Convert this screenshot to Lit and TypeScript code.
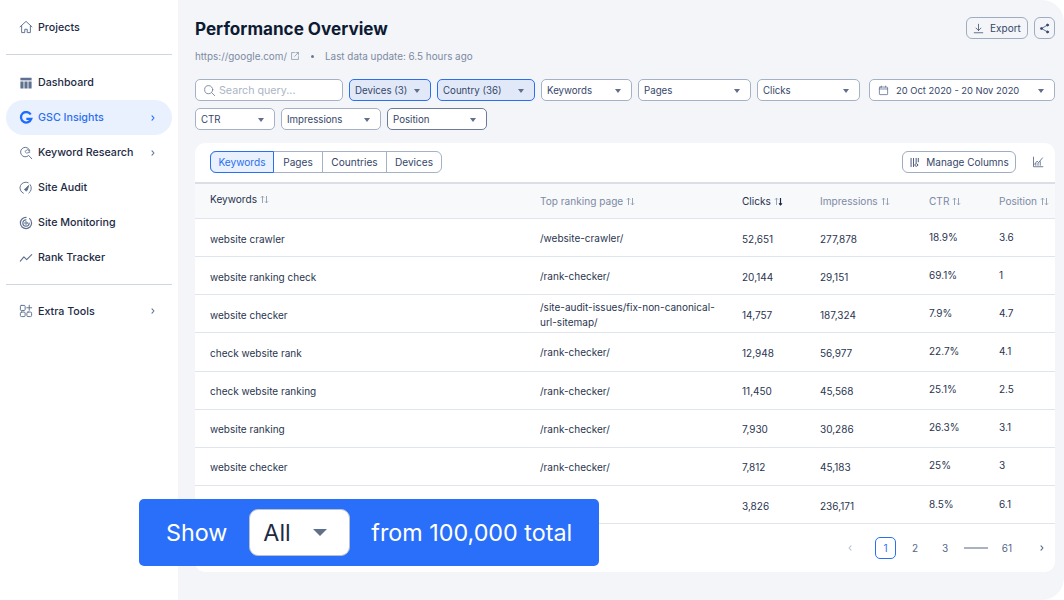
import { LitElement, html, css, svg } from "lit";
import { customElement } from "lit/decorators.js";

const ic = (body: unknown, size = 14, vb = 16) => html`<svg class="ic" width=${size} height=${size} viewBox="0 0 ${vb} ${vb}" fill="none" stroke="currentColor" stroke-width="1.1" stroke-linecap="round" stroke-linejoin="round">${body}</svg>`;

const icons = {
  home: svg`<path d="M1.2 7.8 8 1.6l6.8 6.2M3 6.4V14.4h3.6v-3.8h2.8v3.8H13V6.4"/>`,
  dash: svg`<path d="M1.6 2h12.8v3H1.6z" fill="currentColor" stroke="none"/><path d="M1.6 6.4h3.6v8H1.6zM6.2 6.4h3.6v8H6.2zM10.8 6.4h3.6v8h-3.6z" fill="currentColor" stroke="none"/>`,
  g: svg`<path d="M13.4 4A6 6 0 1 0 14 9H8.4" stroke-width="2.6" stroke-linecap="butt" stroke-linejoin="miter"/>`,
  kw: svg`<path d="M12.4 5.4A5.4 5.4 0 1 0 11 10.8L14.6 14.6"/><path d="M7 6.6l1.6 1.5 3.8-.9-2.2-2.8z" stroke-width=".9"/>`,
  audit: svg`<path d="M5 14A6.6 6.6 0 0 1 10.5 1.9M12.8 4.2a6.6 6.6 0 0 1-1.6 9.6"/><path d="M6.7 9.5 11 5.2 9.4 10.6a1.5 1.5 0 0 1-2.7-1.1z" fill="currentColor"/>`,
  mon: svg`<circle cx="8" cy="8" r="1.4"/><path d="M8 4.4A3.6 3.6 0 1 0 11.6 8M8 1.6A6.4 6.4 0 1 0 14.4 8c0-2-.8-3.8-2.3-5" stroke-width="1.4"/>`,
  rank: svg`<path d="M1.5 11.5 5.6 6.8l3.2 3.1 5.7-5.7" stroke-width="1.3"/>`,
  tools: svg`<rect x="1.6" y="1.6" width="5.4" height="5.8" rx="1"/><rect x="1.6" y="9.2" width="5.4" height="5.2" rx="1.3"/><rect x="9" y="9.2" width="5.4" height="5.2" rx="1.3"/><path d="M11.7 1.4v5.8M8.9 4.3h5.6"/>`,
  search: svg`<circle cx="7" cy="7" r="5"/><path d="m10.8 10.8 3.6 3.6"/>`,
  ext: svg`<path d="M7 2.5H2.5v11h11V9M9.5 2.5h4v4M13.5 2.5 7.5 8.5"/>`,
  cal: svg`<rect x="2" y="3" width="12" height="11" rx="1"/><path d="M2 5.8h12M5 1.6V3M11 1.6V3"/>`,
  down: svg`<path d="M8 1.8v9M4.4 7.4 8 11l3.6-3.6M1.8 14.2h12.4"/>`,
  share: svg`<circle cx="12.4" cy="3" r="1.5" fill="currentColor"/><circle cx="3.6" cy="8" r="1.5" fill="currentColor"/><circle cx="12.4" cy="13" r="1.5" fill="currentColor"/><path d="m12.4 3-8.8 5 8.8 5"/>`,
  cols: svg`<path d="M3 2v12M6.6 2v12M10.4 2v6.4" stroke-width="1.3"/><circle cx="10.6" cy="11.6" r="2"/><path d="M13.5 2v5" stroke-width="1.3"/>`,
  chart: svg`<path d="M2 1.5v12.8h12.5" stroke-width="1.2"/><path d="m3.4 11 3.4-4.2 2 2L14 2.5M5 12.4V10M8 12.4V9.6M11 12.4V7.6" stroke-width="1.2"/>`,
};

const chev = () => html`<svg class="chev" width="4" height="6" viewBox="0 0 4 6" fill="none" stroke="currentColor" stroke-width="1.1" stroke-linecap="round" stroke-linejoin="round"><path d="m1 .8 2 2.2-2 2.2"/></svg>`;
const caret = html`<span class="caret"></span>`;
const sort = (active = false) => html`<span class="sort ${active ? "on" : ""}"><svg width="9" height="9" viewBox="0 0 9 9" fill="none" stroke="currentColor" stroke-width=".9"><path d="M2.5 8V1.2M1 2.6l1.5-1.5L4 2.6"/><path class="dn" d="M6.5 1v6.8M5 6.4l1.5 1.5L8 6.4"/></svg></span>`;

const rows = [
  ["website crawler", "/website-crawler/", "52,651", "277,878", "18.9%", "3.6"],
  ["website ranking check", "/rank-checker/", "20,144", "29,151", "69.1%", "1"],
  ["website checker", "/site-audit-issues/fix-non-canonical-|url-sitemap/", "14,757", "187,324", "7.9%", "4.7"],
  ["check website rank", "/rank-checker/", "12,948", "56,977", "22.7%", "4.1"],
  ["check website ranking", "/rank-checker/", "11,450", "45,568", "25.1%", "2.5"],
  ["website ranking", "/rank-checker/", "7,930", "30,286", "26.3%", "3.1"],
  ["website checker", "/rank-checker/", "7,812", "45,183", "25%", "3"],
  ["website rank", "/checker/", "3,826", "236,171", "8.5%", "6.1"],
];

const filters: [string, number, string][] = [
  ["Devices (3)", 82, "on"],
  ["Country (36)", 98, "on"],
  ["Keywords", 91, ""],
  ["Pages", 113, ""],
  ["Clicks", 103, ""],
];
const filters2: [string, number, string][] = [
  ["CTR", 80, ""],
  ["Impressions", 100, ""],
  ["Position", 100, "dark"],
];

@customElement("app-root")
export class AppRoot extends LitElement {
  static styles = css`
    :host {
      display: flex; position: relative; width: 1064px; height: 600px; overflow: hidden;
      background: #fff; color: #1d2a45;
      font-family: Inter, "Liberation Sans", sans-serif; font-size: 10px;
    }
    * { box-sizing: border-box; }
    .ic { flex: none; display: block; }
    aside { width: 178px; flex: none; padding: 9.5px 6px 0; display: flex; flex-direction: column; }
    .nav {
      height: 35px; display: flex; align-items: center; gap: 5px; padding: 0 17px 0 13px;
      border-radius: 18px; color: #1d2a45; font-weight: 500; font-size: 10.7px;
    }
    .nav .ic { color: #5f7190; }
    .nav .lbl { flex: 1; white-space: nowrap; }
    .chev { flex: none; color: #64748f; display: block; }
    .nav.act { background: #e9f1fe; color: #2a6ff0; }
    .nav.act .ic, .nav.act .chev { color: #1f6bff; }
    .rule { height: 1px; background: #cfd6e0; flex: none; }
    .r1 { margin: 9.5px 0 10px; }
    .r2 { margin: 9px 0 8.5px; }
    main {
      flex: 1; min-width: 0; background: #f3f5f8; border-radius: 0 22px 22px 0;
      padding: 17px 9px 28px 17px; display: flex; flex-direction: column;
    }
    .head { display: flex; justify-content: space-between; align-items: flex-start; height: 22px; }
    h1 { margin: 0; font-size: 17.1px; line-height: 24px; font-weight: 700; color: #0e1a33; }
    .head-btns { display: flex; gap: 6px; }
    .btn {
      height: 22px; border: 1px solid #9fadc0; border-radius: 6px; display: flex; align-items: center;
      justify-content: center; gap: 6px; color: #35466a; background: transparent; white-space: nowrap;
    }
    .export { width: 62px; }
    .share { width: 21px; }
    .sub { display: flex; align-items: center; height: 16px; margin-top: 9px; color: #7c8aa3; white-space: nowrap; font-size: 9.9px; }
    .sub .ic { margin-left: 3px; }
    .sub .dot { width: 3px; height: 3px; border-radius: 50%; background: #6a7a96; margin: 0 11px 0 11px; }
    .filters { display: flex; gap: 6px; margin-top: 15px; }
    .filters + .filters { margin-top: 7px; }
    .f {
      height: 22px; border: 1px solid #a5b1c4; border-radius: 5px; background: #fff; display: flex; align-items: center;
      padding: 1px 10px 0 5px; justify-content: space-between; color: #35466a; white-space: nowrap; font-size: 9.7px;
    }
    .f.on { background: #e1e9f8; border-color: #2a6ff0; }
    .f.dark { border-color: #6c7c98; }
    .caret { width: 0; height: 0; flex: none; border-left: 3.5px solid transparent; border-right: 3.5px solid transparent; border-top: 4px solid #606f8b; }
    .search { width: 148px; justify-content: flex-start; gap: 3px; padding-left: 7px; color: #abb5c5; font-size: 10.7px; }
    .search .ic { color: #76859e; }
    .date { width: 186px; margin-left: 3px; padding-left: 8px; }
    .date .ic { color: #55678a; }
    .date span.t { flex: 1; margin-left: 7px; font-size: 9.4px; }
    .card { flex: 1; margin-top: 13px; background: #fff; border-radius: 10px; display: flex; flex-direction: column; overflow: hidden; }
    .bar { height: 39px; flex: none; display: flex; align-items: center; padding: 0 11px 1px 15px; }
    .tabs { display: flex; height: 22px; border: 1px solid #a5b1c4; border-radius: 6px; font-size: 10.1px; }
    .tab { display: flex; align-items: center; justify-content: center; color: #35466a; border-left: 1px solid #a5b1c4; }
    .tab.t1 { width: 64px; margin: -1px 0 -1px -1px; border: 1px solid #2a6ff0; border-radius: 6px 0 0 6px; background: #e9f1fe; color: #2a6ff0; }
    .tab.t2 { width: 48px; border-left: 0; }
    .tab.t3 { width: 64px; }
    .tab.t4 { width: 55px; }
    .manage { width: 114px; margin-left: auto; }
    .cb { margin-left: 16px; color: #5f7190; }
    .row {
      display: grid; grid-template-columns: 330px 202px 78px 109px 70px 1fr; align-items: center;
      padding: 2px 0 0 15px; height: 38.15px; border-bottom: 1px solid #e0e4ec; white-space: nowrap; color: #2a3550; flex: none;
    }
    .th { height: 37px; padding-top: 0; background: #f8f9fb; border-top: 2px solid #dadfe7; border-bottom: 1px solid #e0e4ec; color: #7c8aa3; font-size: 10.1px; }
    .th .dark { color: #27334e; }
    .th div { display: flex; align-items: center; gap: 3px; }
    .sort { color: #8c99ad; display: inline-flex; }
    .sort.on .dn { stroke: #1d2a45; stroke-width: 1.2; }
    .up { padding-bottom: 4px; }
    .two { line-height: 15px; }
    .pager { flex: 1; display: flex; align-items: center; justify-content: flex-end; padding: 0 11px 0 0; color: #55678a; }
    .pager span { display: flex; align-items: center; justify-content: center; }
    .pg { width: 30px; height: 22px; }
    .pg1 { width: 21px; height: 22px; border: 1.3px solid #2a6ff0; border-radius: 5px; color: #2a6ff0; margin: 0 4px; }
    .dash { width: 24px; height: 2px; background: #a8b2c0; margin: 0 7px 0 4px; }
    .p61 { width: 24px; }
    .prev { margin-right: 19px; }
    .next { margin-left: 21px; }
    .next .chev { color: #55678a; }
    .prev .chev { color: #b9c2cf; transform: scaleX(-1); }
    .banner {
      position: absolute; left: 139px; top: 499px; width: 460px; height: 67px; background: #2a6ff9; border-radius: 5px;
      display: flex; align-items: center; padding-left: 27px; color: #fff; font-size: 23.3px; white-space: nowrap;
    }
    .sel {
      width: 101px; height: 47px; margin: 0 21px 0 22px; background: #fff; border: 1.5px solid #b8c0cc; border-radius: 9px;
      display: flex; align-items: center; justify-content: space-between; padding: 0 22px 0 13px; color: #1d2a45;
    }
    .sel .caret { border-left-width: 7px; border-right-width: 7px; border-top-width: 7px; }
  `;

  private nav(icon: unknown, label: string, arrow = false, act = false) {
    return html`<div class="nav ${act ? "act" : ""}">${ic(icon)}<span class="lbl">${label}</span>${arrow ? chev() : ""}</div>`;
  }

  private fl(list: [string, number, string][]) {
    return list.map(([t, w, c]) => html`<div class="f ${c}" style="width:${w}px"><span>${t}</span>${caret}</div>`);
  }

  render() {
    return html`
      <aside>
        ${this.nav(icons.home, "Projects")}
        <div class="rule r1"></div>
        ${this.nav(icons.dash, "Dashboard")}
        ${this.nav(icons.g, "GSC Insights", true, true)}
        ${this.nav(icons.kw, "Keyword Research", true)}
        ${this.nav(icons.audit, "Site Audit")}
        ${this.nav(icons.mon, "Site Monitoring")}
        ${this.nav(icons.rank, "Rank Tracker")}
        <div class="rule r2"></div>
        ${this.nav(icons.tools, "Extra Tools", true)}
      </aside>
      <main>
        <div class="head">
          <h1>Performance Overview</h1>
          <div class="head-btns">
            <div class="btn export">${ic(icons.down, 11)}Export</div>
            <div class="btn share">${ic(icons.share, 11)}</div>
          </div>
        </div>
        <div class="sub">https://google.com/${ic(icons.ext, 10)}<span class="dot"></span>Last data update: 6.5 hours ago</div>
        <div class="filters">
          <div class="f search">${ic(icons.search, 13)}<span>Search query...</span></div>
          ${this.fl(filters)}
          <div class="f date">${ic(icons.cal, 11)}<span class="t">20 Oct 2020 - 20 Nov 2020</span>${caret}</div>
        </div>
        <div class="filters">${this.fl(filters2)}</div>
        <section class="card">
          <div class="bar">
            <div class="tabs">
              <div class="tab t1">Keywords</div>
              <div class="tab t2">Pages</div>
              <div class="tab t3">Countries</div>
              <div class="tab t4">Devices</div>
            </div>
            <div class="btn manage">${ic(icons.cols, 11)}Manage Columns</div>
            <div class="cb">${ic(icons.chart, 12)}</div>
          </div>
          <div class="row th">
            <div class="dark up">Keywords ${sort()}</div>
            <div>Top ranking page ${sort()}</div>
            <div class="dark">Clicks ${sort(true)}</div>
            <div>Impressions ${sort()}</div>
            <div>CTR ${sort()}</div>
            <div>Position ${sort()}</div>
          </div>
          ${rows.map(
            (r) => html`<div class="row">
              <div>${r[0]}</div>
              <div class="two">${r[1].split("|").map((s, i) => html`${i ? html`<br />` : ""}${s}`)}</div>
              <div>${r[2]}</div>
              <div>${r[3]}</div>
              <div class="up">${r[4]}</div>
              <div class="up">${r[5]}</div>
            </div>`
          )}
          <div class="pager">
            <span class="prev">${chev()}</span>
            <span class="pg1">1</span>
            <span class="pg">2</span>
            <span class="pg">3</span>
            <span class="dash"></span>
            <span class="p61">61</span>
            <span class="next">${chev()}</span>
          </div>
        </section>
      </main>
      <div class="banner">
        <span>Show</span>
        <div class="sel"><span>All</span>${caret}</div>
        <span>from 100,000 total</span>
      </div>
    `;
  }
}
